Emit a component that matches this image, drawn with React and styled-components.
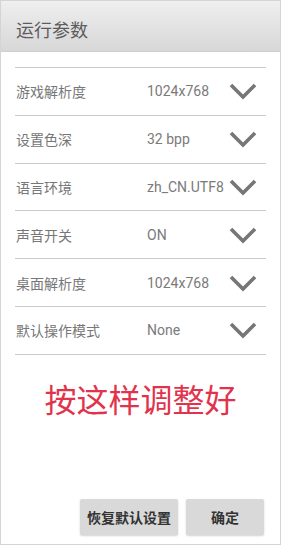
import React from 'react';
import styled, { createGlobalStyle } from 'styled-components';

const GlobalStyle = createGlobalStyle`
  html, body {
    margin: 0;
    padding: 0;
    background: #ffffff;
  }
  * {
    box-sizing: border-box;
  }
`;

const Screen = styled.div`
  width: 281px;
  height: 545px;
  display: flex;
  flex-direction: column;
  border: 1px solid #d4d4d4;
  background: #ffffff;
  font-family: Roboto, 'Noto Sans CJK SC', sans-serif;
`;

const Header = styled.div`
  height: 51px;
  display: flex;
  align-items: center;
  padding: 5px 0 0 15px;
  background: linear-gradient(to bottom, #efefef, #d7d7d7);
  border-bottom: 1px solid #cfcfcf;
  color: #5c5c5c;
  font-size: 18px;
`;

const List = styled.div`
  margin: 15px 14px 0 14px;
  border-bottom: 1.5px solid #cacaca;
`;

const Row = styled.div`
  height: 47.8px;
  display: grid;
  grid-template-columns: 131px 1fr 28px;
  align-items: center;
  padding: 0 9px 0 1px;
  border-top: 1.5px solid #cacaca;
  color: #777777;
  font-size: 14px;
`;

const Label = styled.span`
  white-space: nowrap;
`;

const Value = styled.span`
  white-space: nowrap;
  color: #7a7a7a;
`;

const Note = styled.div`
  margin-top: 26px;
  text-align: center;
  color: #e2334d;
  font-size: 32px;
  line-height: 40px;
`;

const Footer = styled.div`
  margin-top: auto;
  display: flex;
  justify-content: flex-end;
  gap: 8px;
  padding: 0 16px 9px 0;
`;

const Button = styled.button`
  width: ${(p) => p.$w}px;
  height: 36px;
  border: none;
  border-radius: 2px;
  background: #d9d9d9;
  box-shadow: 0 1px 2px rgba(0, 0, 0, 0.18);
  color: #333333;
  font-family: Roboto, 'Noto Sans CJK SC', sans-serif;
  font-size: 14px;
  font-weight: bold;
  padding: 0;
`;

const Chevron = () => (
  <svg width="28" height="18" viewBox="0 0 28 18">
    <polyline
      points="2,3 14,15 26,3"
      fill="none"
      stroke="#767676"
      strokeWidth="3.6"
      strokeLinejoin="miter"
    />
  </svg>
);

const params = [
  { label: '游戏解析度', value: '1024x768' },
  { label: '设置色深', value: '32 bpp' },
  { label: '语言环境', value: 'zh_CN.UTF8' },
  { label: '声音开关', value: 'ON' },
  { label: '桌面解析度', value: '1024x768' },
  { label: '默认操作模式', value: 'None' },
];

const App = () => {
  return (
    <Screen>
      <GlobalStyle />
      <Header>运行参数</Header>
      <List>
        {params.map((p) => (
          <Row key={p.label}>
            <Label>{p.label}</Label>
            <Value>{p.value}</Value>
            <Chevron />
          </Row>
        ))}
      </List>
      <Note>按这样调整好</Note>
      <Footer>
        <Button $w={98}>恢复默认设置</Button>
        <Button $w={78}>确定</Button>
      </Footer>
    </Screen>
  );
};

export default App;
